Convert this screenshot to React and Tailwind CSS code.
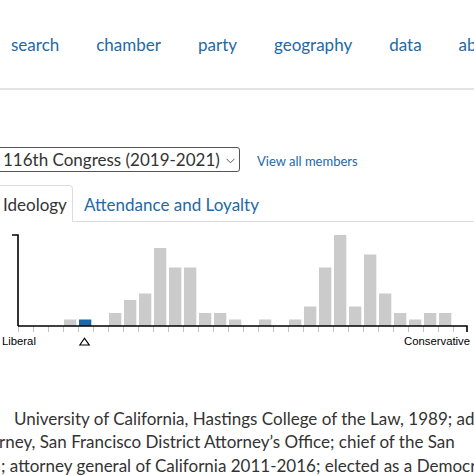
import React from "react";

const counts = [0,0,0,1,1,0,2,4,5,12,9,9,2,2,1,0,1,0,1,3,9,14,3,11,5,2,1,2,2,0];
const BLUE_INDEX = 4;

function Chart() {
  const base = 326;
  const unit = 6.5;
  return (
    <svg width="474" height="130" viewBox="0 222 474 130" className="block">
      {counts.map((c, i) =>
        c > 0 ? (
          <rect
            key={"b" + i}
            x={18 + 15 * i + 1}
            y={base - c * unit}
            width={12.3}
            height={c * unit}
            fill={i === BLUE_INDEX ? "#1c68aa" : "#cbcbcb"}
          />
        ) : null
      )}
      {counts.map((_, i) => (
        <line key={"t" + i} x1={18 + 15 * i + 0.5} x2={18 + 15 * i + 0.5} y1={326} y2={332} stroke="#c4c4c4" strokeWidth="1" />
      ))}
      <path d="M18,326 H467 V332" fill="none" stroke="#000" strokeWidth="1.6" />
      <path d="M12,235 H18 V326" fill="none" stroke="#000" strokeWidth="1.6" />
      <text x="2" y="345" fontFamily="'Liberation Sans', Arial, sans-serif" fontSize="11.3" fill="#000">Liberal</text>
      <text x="470" y="345" textAnchor="end" fontFamily="'Liberation Sans', Arial, sans-serif" fontSize="11.3" fill="#000">Conservative</text>
      <polygon points="79.8,345 84.5,338.2 89.2,345" fill="none" stroke="#000" strokeWidth="1.2" />
    </svg>
  );
}

export default function App() {
  return (
    <div className="w-[474px] h-[475px] overflow-hidden bg-white text-[#333] font-['Lato','Noto_Sans',sans-serif]">
      <nav className="h-[90px] pt-[2px] flex items-center gap-[37px] pl-[11px] whitespace-nowrap overflow-hidden text-[17px] leading-[20.4px] text-[#2369a6] border-b-2 border-[#e3e3e3]">
        <span>search</span>
        <span>chamber</span>
        <span>party</span>
        <span>geography</span>
        <span>data</span>
        <span>about</span>
      </nav>

      <div className="mt-[57px] flex items-baseline whitespace-nowrap">
        <div className="-ml-[10px] w-[250px] h-[25px] border border-[#555] rounded-[3px] flex items-center pl-[12px] pt-[1px] text-[17px] leading-[20.4px] text-[#333]">
          <span>116th Congress (2019-2021)</span>
          <svg width="9" height="6" viewBox="0 0 9 6" className="ml-[6px] mt-[1px]">
            <path d="M0.5,0.8 L4.5,4.8 L8.5,0.8" fill="none" stroke="#555" strokeWidth="1" />
          </svg>
        </div>
        <span className="ml-[17px] text-[13px] text-[#2369a6]">View all members</span>
      </div>

      <div className="mt-[13px] flex items-end whitespace-nowrap">
        <div className="-ml-[12px] w-[85px] h-[37px] border border-b-0 border-[#ddd] rounded-t-[4px] pl-[14px] pt-[9px] text-[17px] leading-[20.4px] text-[#333] bg-white">
          Ideology
        </div>
        <div className="flex-1 h-[37px] border-b border-[#ddd] pl-[11px] pt-[10px] text-[17px] leading-[20.4px] text-[#2369a6]">
          Attendance and Loyalty
        </div>
      </div>

      <Chart />

      <div className="mt-[55px] text-[17px] leading-[23.4px] text-[#333] whitespace-nowrap">
        <div className="pl-[14px]">University of California, Hastings College of the Law, 1989; admitted to the California bar</div>
        <div className="-ml-[1px]">rney, San Francisco District Attorney’s Office; chief of the San</div>
        <div className="pl-[1px]">; attorney general of California 2011-2016; elected as a Democrat</div>
      </div>
    </div>
  );
}
